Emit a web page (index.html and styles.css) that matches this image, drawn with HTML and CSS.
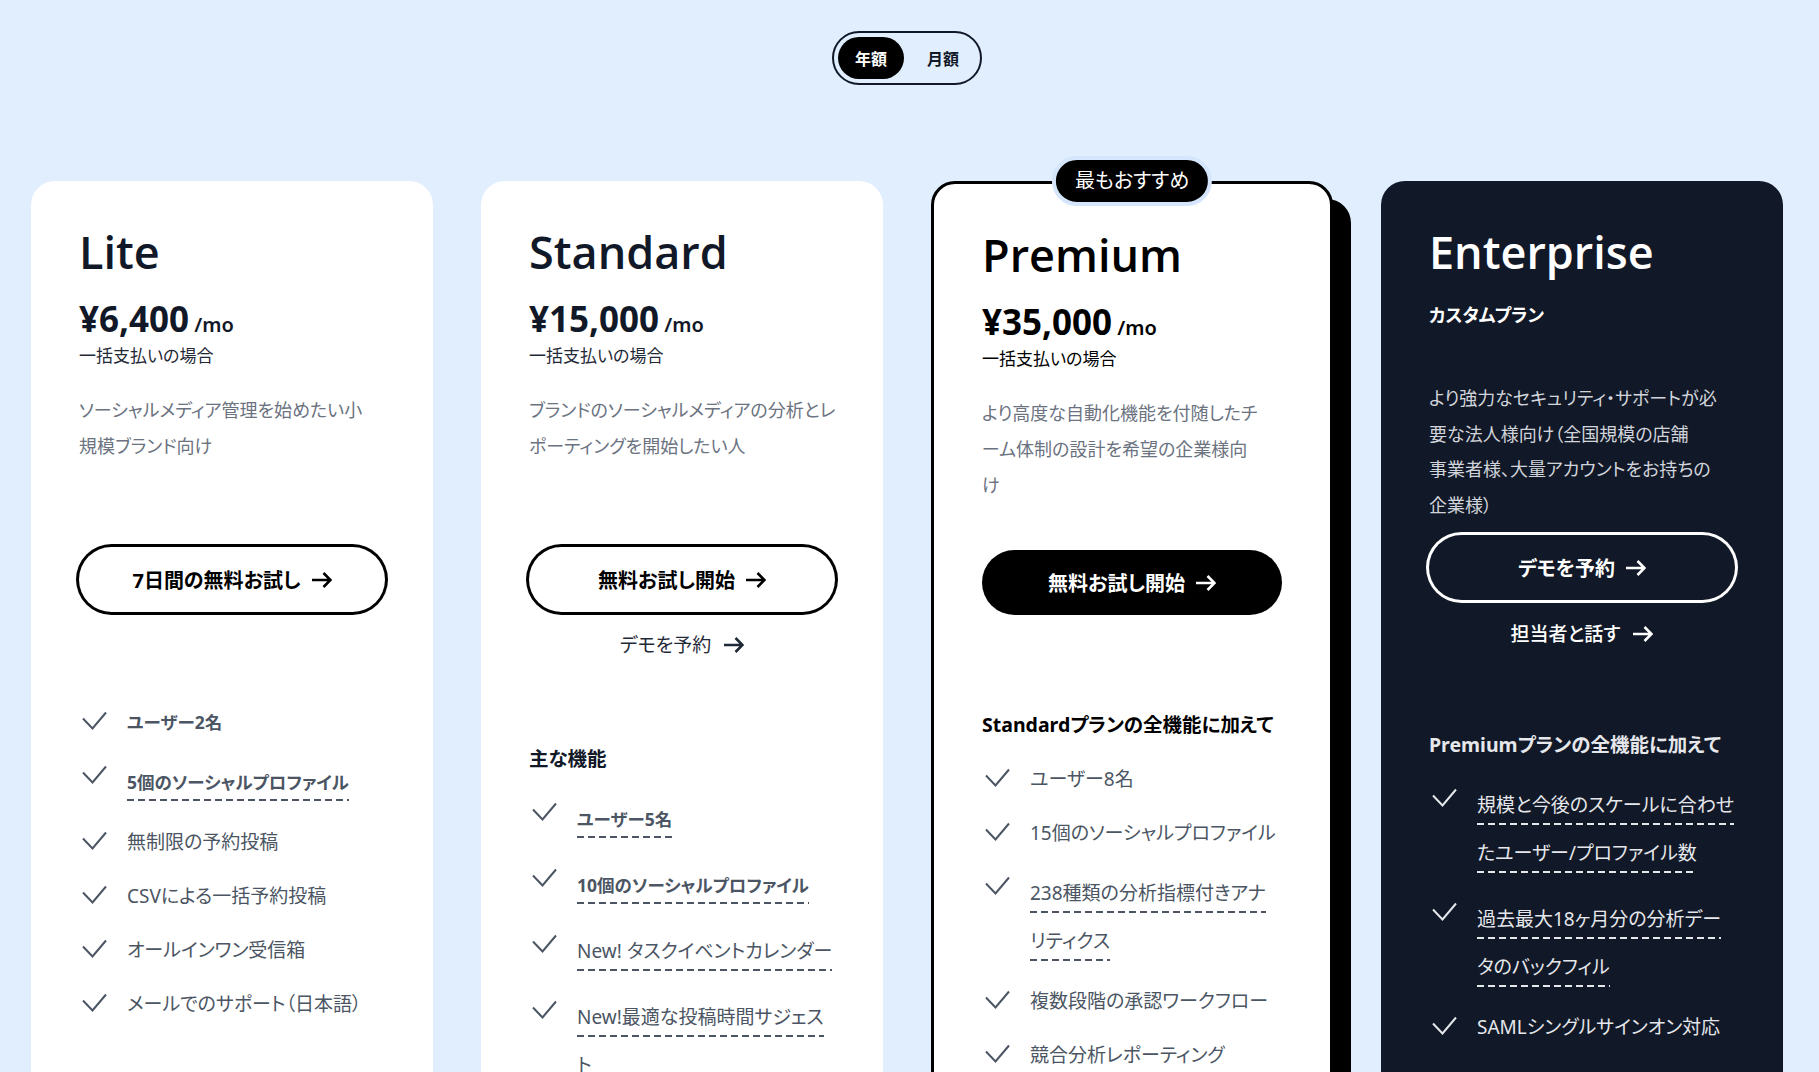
FILE: index.html
```html
<!DOCTYPE html>
<html lang="ja">
<head>
<meta charset="utf-8">
<title>料金プラン</title>
<link rel="stylesheet" href="styles.css">
</head>
<body>
<div class="page">
  <div class="toggle">
    <span class="toggle-opt is-active">年額</span>
    <span class="toggle-opt">月額</span>
  </div>

  <div class="plans">
    <!-- Lite -->
    <section class="card">
      <h2 class="plan-name">Lite</h2>
      <p class="price"><span class="amount">¥6,400</span><span class="per"> /mo</span></p>
      <p class="note">一括支払いの場合</p>
      <p class="desc">ソーシャルメディア管理を始めたい小<br>規模ブランド向け</p>
      <a class="btn" href="#">7日間の無料お試し<svg class="arrow" viewBox="0 0 21 20"><path d="M1 10H19.5M12.5 3L19.5 10L12.5 17"/></svg></a>
      <div class="features features--solo">
        <ul class="feature-list">
          <li><svg class="check" viewBox="0 0 36 36"><path d="M4 14.5L13.5 24.5L27 8.5"/></svg><span class="ftext strong">ユーザー2名</span></li>
          <li><svg class="check" viewBox="0 0 36 36"><path d="M4 14.5L13.5 24.5L27 8.5"/></svg><span class="ftext strong"><span class="u">5個のソーシャルプロファイル</span></span></li>
          <li><svg class="check" viewBox="0 0 36 36"><path d="M4 14.5L13.5 24.5L27 8.5"/></svg><span class="ftext">無制限の予約投稿</span></li>
          <li><svg class="check" viewBox="0 0 36 36"><path d="M4 14.5L13.5 24.5L27 8.5"/></svg><span class="ftext">CSVによる一括予約投稿</span></li>
          <li><svg class="check" viewBox="0 0 36 36"><path d="M4 14.5L13.5 24.5L27 8.5"/></svg><span class="ftext">オールインワン受信箱</span></li>
          <li><svg class="check" viewBox="0 0 36 36"><path d="M4 14.5L13.5 24.5L27 8.5"/></svg><span class="ftext">メールでのサポート（日本語）</span></li>
        </ul>
      </div>
    </section>

    <!-- Standard -->
    <section class="card">
      <h2 class="plan-name">Standard</h2>
      <p class="price"><span class="amount">¥15,000</span><span class="per"> /mo</span></p>
      <p class="note">一括支払いの場合</p>
      <p class="desc">ブランドのソーシャルメディアの分析とレ<br>ポーティングを開始したい人</p>
      <a class="btn" href="#">無料お試し開始<svg class="arrow" viewBox="0 0 21 20"><path d="M1 10H19.5M12.5 3L19.5 10L12.5 17"/></svg></a>
      <a class="link" href="#">デモを予約<svg class="arrow" viewBox="0 0 21 20"><path d="M1 10H19.5M12.5 3L19.5 10L12.5 17"/></svg></a>
      <div class="features">
        <h3 class="features-title">主な機能</h3>
        <ul class="feature-list">
          <li><svg class="check" viewBox="0 0 36 36"><path d="M4 14.5L13.5 24.5L27 8.5"/></svg><span class="ftext strong"><span class="u">ユーザー5名</span></span></li>
          <li><svg class="check" viewBox="0 0 36 36"><path d="M4 14.5L13.5 24.5L27 8.5"/></svg><span class="ftext strong"><span class="u">10個のソーシャルプロファイル</span></span></li>
          <li><svg class="check" viewBox="0 0 36 36"><path d="M4 14.5L13.5 24.5L27 8.5"/></svg><span class="ftext"><span class="u">New! タスクイベントカレンダー</span></span></li>
          <li><svg class="check" viewBox="0 0 36 36"><path d="M4 14.5L13.5 24.5L27 8.5"/></svg><span class="ftext"><span class="u">New!最適な投稿時間サジェス<br>ト</span></span></li>
        </ul>
      </div>
    </section>

    <!-- Premium -->
    <section class="card card--featured">
      <span class="badge">最もおすすめ</span>
      <h2 class="plan-name">Premium</h2>
      <p class="price"><span class="amount">¥35,000</span><span class="per"> /mo</span></p>
      <p class="note">一括支払いの場合</p>
      <p class="desc">より高度な自動化機能を付随したチ<br>ーム体制の設計を希望の企業様向<br>け</p>
      <a class="btn btn--solid" href="#">無料お試し開始<svg class="arrow" viewBox="0 0 21 20"><path d="M1 10H19.5M12.5 3L19.5 10L12.5 17"/></svg></a>
      <div class="features features--solo">
        <h3 class="features-title">Standardプランの全機能に加えて</h3>
        <ul class="feature-list">
          <li><svg class="check" viewBox="0 0 36 36"><path d="M4 14.5L13.5 24.5L27 8.5"/></svg><span class="ftext">ユーザー8名</span></li>
          <li><svg class="check" viewBox="0 0 36 36"><path d="M4 14.5L13.5 24.5L27 8.5"/></svg><span class="ftext">15個のソーシャルプロファイル</span></li>
          <li><svg class="check" viewBox="0 0 36 36"><path d="M4 14.5L13.5 24.5L27 8.5"/></svg><span class="ftext"><span class="u">238種類の分析指標付きアナ<br>リティクス</span></span></li>
          <li><svg class="check" viewBox="0 0 36 36"><path d="M4 14.5L13.5 24.5L27 8.5"/></svg><span class="ftext">複数段階の承認ワークフロー</span></li>
          <li><svg class="check" viewBox="0 0 36 36"><path d="M4 14.5L13.5 24.5L27 8.5"/></svg><span class="ftext">競合分析レポーティング</span></li>
        </ul>
      </div>
    </section>

    <!-- Enterprise -->
    <section class="card card--dark">
      <h2 class="plan-name">Enterprise</h2>
      <p class="tagline">カスタムプラン</p>
      <p class="desc desc--wide">より強力なセキュリティ・サポートが必<br>要な法人様向け（全国規模の店舗<br>事業者様、大量アカウントをお持ちの<br>企業様）</p>
      <a class="btn btn--light" href="#">デモを予約<svg class="arrow" viewBox="0 0 21 20"><path d="M1 10H19.5M12.5 3L19.5 10L12.5 17"/></svg></a>
      <a class="link link--light" href="#">担当者と話す<svg class="arrow" viewBox="0 0 21 20"><path d="M1 10H19.5M12.5 3L19.5 10L12.5 17"/></svg></a>
      <div class="features features--dark">
        <h3 class="features-title">Premiumプランの全機能に加えて</h3>
        <ul class="feature-list">
          <li><svg class="check" viewBox="0 0 36 36"><path d="M4 14.5L13.5 24.5L27 8.5"/></svg><span class="ftext"><span class="u">規模と今後のスケールに合わせ<br>たユーザー/プロファイル数</span></span></li>
          <li><svg class="check" viewBox="0 0 36 36"><path d="M4 14.5L13.5 24.5L27 8.5"/></svg><span class="ftext"><span class="u">過去最大18ヶ月分の分析デー<br>タのバックフィル</span></span></li>
          <li><svg class="check" viewBox="0 0 36 36"><path d="M4 14.5L13.5 24.5L27 8.5"/></svg><span class="ftext">SAMLシングルサインオン対応</span></li>
        </ul>
      </div>
    </section>
  </div>
</div>
</body>
</html>
```

FILE: styles.css
```css
* { box-sizing: border-box; }

html, body {
  margin: 0;
  padding: 0;
}

body {
  background: #e0eefe;
  font-family: "Noto Sans", "Noto Sans CJK JP", sans-serif;
  font-feature-settings: "palt";
  color: #111827;
  overflow: hidden;
}

.page {
  padding: 31px 36px 0 31px;
}

/* billing toggle */
.toggle {
  display: flex;
  gap: 6px;
  width: fit-content;
  margin: 0 auto;
  padding: 4px;
  border: 2px solid #111827;
  border-radius: 999px;
}

.toggle-opt {
  width: 66px;
  height: 42px;
  display: flex;
  align-items: center;
  justify-content: center;
  border-radius: 999px;
  font-size: 16px;
  font-weight: 700;
  color: #111827;
}

.toggle-opt.is-active {
  background: #000;
  color: #fff;
}

/* plan grid */
.plans {
  margin-top: 96px;
  display: grid;
  grid-template-columns: repeat(4, 402px);
  gap: 48px;
}

.card {
  position: relative;
  background: #fff;
  border-radius: 24px;
  padding: 48px;
  display: flex;
  flex-direction: column;
  min-height: 1000px;
}

.card--featured {
  border: 3px solid #000;
  box-shadow: 18px 18px 0 0 #000;
  color: #000;
}

.card--dark {
  background: #111827;
  color: #fff;
}

.badge {
  position: absolute;
  top: -28px;
  left: 50%;
  transform: translateX(-50%);
  height: 50px;
  padding: 0 19px;
  border: 4px solid #d5e6fc;
  border-radius: 999px;
  background: #000;
  color: #fff;
  font-size: 20px;
  line-height: 42px;
  white-space: nowrap;
}

.plan-name {
  margin: 0;
  font-family: "Open Sans", "Noto Sans", sans-serif;
  font-size: 45px;
  line-height: 45px;
  font-weight: 600;
}

.price {
  margin: 24px 0 0;
  font-size: 35px;
  line-height: 42px;
  font-weight: 700;
}

.per {
  font-size: 20px;
  line-height: 1;
  font-weight: 600;
}

.note {
  margin: 4px 0 0;
  font-size: 17px;
  line-height: 24px;
  color: #1f2937;
}

.card--featured .note { color: #000; }

.tagline {
  margin: 28px 0 0;
  font-size: 18px;
  line-height: 27px;
  font-weight: 700;
}

.desc {
  margin: 24px 0 0;
  min-height: 155px;
  font-size: 18px;
  line-height: 36px;
  color: #6b7280;
  white-space: nowrap;
}

.desc--wide {
  margin: 52px 0 12px;
  min-height: 0;
  line-height: 35.5px;
  color: #d1d5db;
}

/* buttons */
.btn {
  height: 65px;
  display: flex;
  align-items: center;
  justify-content: center;
  gap: 10px;
  border-radius: 999px;
  box-shadow: 0 0 0 3px #000;
  font-size: 20px;
  font-weight: 700;
  color: #000;
  text-decoration: none;
}

.btn--solid {
  background: #000;
  box-shadow: none;
  color: #fff;
}

.btn--light {
  box-shadow: 0 0 0 3px #fff;
  color: #fff;
}

.arrow {
  width: 21px;
  height: 20px;
  flex: none;
  fill: none;
  stroke: currentColor;
  stroke-width: 2.6;
}

.link {
  margin-top: 19px;
  height: 28px;
  display: flex;
  align-items: center;
  justify-content: center;
  gap: 12px;
  font-size: 19px;
  line-height: 28px;
  color: #1f2937;
  text-decoration: none;
}

.link--light {
  margin-top: 20px;
  color: #fff;
  font-weight: 500;
}

/* features */
.features {
  margin-top: 82px;
}

.features--solo {
  margin-top: 92px;
}

.features--dark {
  margin-top: 79px;
}

.features-title {
  margin: 0 0 18px;
  font-size: 19.5px;
  line-height: 36px;
  font-weight: 700;
  color: #111827;
}

.card--featured .features-title { color: #000; }
.card--dark .features-title { color: #e5e7eb; }

.feature-list {
  list-style: none;
  margin: 0;
  padding: 0;
  display: flex;
  flex-direction: column;
  gap: 18px;
}

.feature-list li {
  display: flex;
  align-items: flex-start;
  gap: 12px;
  font-size: 19px;
  line-height: 36px;
  color: #4b5563;
}

.card--dark .feature-list li { color: #e5e7eb; }

.check {
  width: 36px;
  height: 36px;
  flex: none;
  fill: none;
  stroke: currentColor;
  stroke-width: 2;
}

.ftext {
  white-space: nowrap;
}

.ftext.strong {
  font-size: 17.5px;
  font-weight: 700;
}

.u {
  line-height: 48px;
  padding-bottom: 7px;
  background-image: linear-gradient(to right, currentColor 7px, transparent 7px);
  background-size: 11px 2px;
  background-repeat: repeat-x;
  background-position: left bottom;
  -webkit-box-decoration-break: clone;
  box-decoration-break: clone;
}
```
